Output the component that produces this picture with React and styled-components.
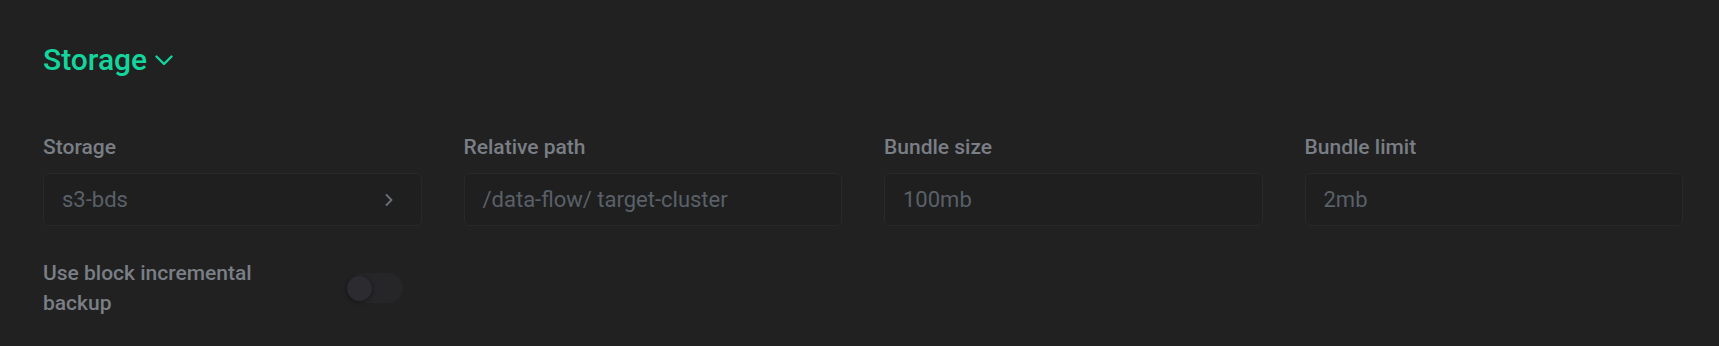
import React from "react";
import styled, { createGlobalStyle } from "styled-components";

const Global = createGlobalStyle`
  html, body {
    margin: 0;
    padding: 0;
    background: #212121;
    overflow: hidden;
  }
  * { box-sizing: border-box; }
`;

const Page = styled.div`
  width: 1719px;
  height: 346px;
  background: #212121;
  padding: 42px 36px 0 43px;
  font-family: Roboto, "Noto Sans", sans-serif;
`;

const SectionHeader = styled.button`
  display: flex;
  align-items: center;
  gap: 8px;
  background: none;
  border: 0;
  padding: 0;
  margin: 0;
  color: #13d69d;
  font-family: inherit;
  font-size: 30px;
  font-weight: 500;
  line-height: 36px;
  cursor: pointer;
`;

const Fields = styled.div`
  display: grid;
  grid-template-columns: repeat(4, 1fr);
  column-gap: 42px;
  margin-top: 57px;
`;

const Field = styled.div`
  display: flex;
  flex-direction: column;
  gap: 14px;
`;

const Label = styled.label`
  color: #7a7e85;
  font-size: 21px;
  font-weight: 500;
  line-height: 24px;
`;

const InputBox = styled.div`
  height: 53px;
  display: flex;
  align-items: center;
  justify-content: space-between;
  padding: 0 28px 0 18px;
  background: #1f1f1f;
  border: 1px solid #29292b;
  border-radius: 6px;
  color: #5a6068;
  font-size: 22px;
  font-weight: 400;
`;

const ToggleRow = styled.div`
  display: flex;
  align-items: center;
  gap: 64px;
  margin-top: 32px;
`;

const ToggleLabel = styled.span`
  width: 240px;
  color: #7a7e85;
  font-size: 21px;
  font-weight: 500;
  line-height: 30px;
`;

const Track = styled.div`
  position: relative;
  width: 56px;
  height: 30px;
  border-radius: 15px;
  background: ${(p) => (p.$on ? "#13d69d" : "#262629")};
`;

const Knob = styled.div`
  position: absolute;
  top: 3px;
  left: ${(p) => (p.$on ? "31px" : "0")};
  width: 25px;
  height: 25px;
  border-radius: 50%;
  background: #2c2b30;
  box-shadow: 0 1px 4px rgba(0, 0, 0, 0.45);
`;

const ChevronDown = () => (
  <svg width="18" height="11" viewBox="0 0 18 11" fill="none">
    <path d="M1.5 1.5 L9 9 L16.5 1.5" stroke="#13d69d" strokeWidth="2.4" strokeLinecap="round" strokeLinejoin="round" />
  </svg>
);

const ChevronRight = () => (
  <svg width="8" height="12" viewBox="0 0 8 12" fill="none">
    <path d="M1.5 1 L6.5 6 L1.5 11" stroke="#6b7078" strokeWidth="1.8" strokeLinecap="round" strokeLinejoin="round" />
  </svg>
);

const fields = [
  { label: "Storage", value: "s3-bds", select: true },
  { label: "Relative path", value: "/data-flow/ target-cluster" },
  { label: "Bundle size", value: "100mb" },
  { label: "Bundle limit", value: "2mb" },
];

export default function App() {
  return (
    <>
      <Global />
      <Page>
        <SectionHeader>
          Storage
          <ChevronDown />
        </SectionHeader>
        <Fields>
          {fields.map((f) => (
            <Field key={f.label}>
              <Label>{f.label}</Label>
              <InputBox>
                <span>{f.value}</span>
                {f.select && <ChevronRight />}
              </InputBox>
            </Field>
          ))}
        </Fields>
        <ToggleRow>
          <ToggleLabel>Use block incremental backup</ToggleLabel>
          <Track>
            <Knob />
          </Track>
        </ToggleRow>
      </Page>
    </>
  );
}
